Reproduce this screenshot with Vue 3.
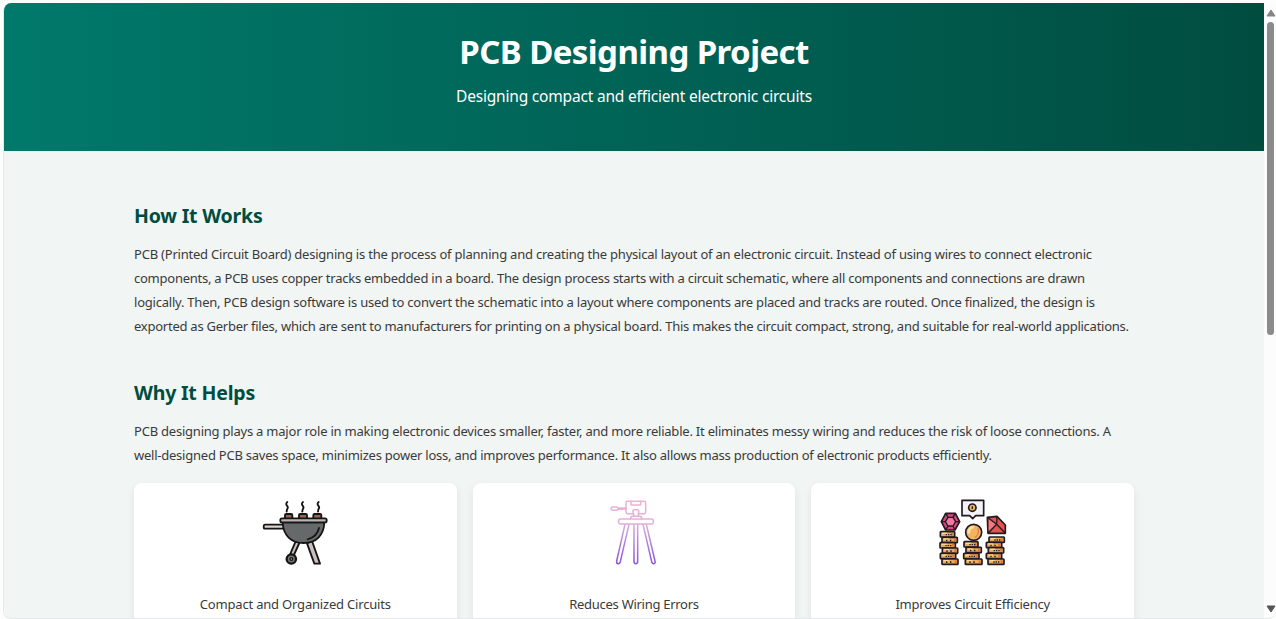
<script setup>
const works = [
  ['PCB (Printed Circuit Board) designing is the process of planning and creating the physical layout of an electronic circuit. Instead of using wires to connect electronic', 958],
  ['components, a PCB uses copper tracks embedded in a board. The design process starts with a circuit schematic, where all components and connections are drawn', 951],
  ['logically. Then, PCB design software is used to convert the schematic into a layout where components are placed and tracks are routed. Once finalized, the design is', 961],
  ['exported as Gerber files, which are sent to manufacturers for printing on a physical board. This makes the circuit compact, strong, and suitable for real-world applications.', 995],
]
const helps = [
  ['PCB designing plays a major role in making electronic devices smaller, faster, and more reliable. It eliminates messy wiring and reduces the risk of loose connections. A', 977],
  ['well-designed PCB saves space, minimizes power loss, and improves performance. It also allows mass production of electronic products efficiently.', 858],
]

// Spreads a line's letters so that it takes up the given measure.
const vFit = {
  mounted(el, { value }) {
    el.style.letterSpacing = '0.001px'
    const w = el.getBoundingClientRect().width
    el.style.letterSpacing = (value - w) / el.textContent.length + 'px'
  },
}

const coins = [
  [31, 119, 43], [36, 136, 46], [30, 152, 46], [37, 168, 46], [31, 184, 46], [36, 201, 48],
  [102, 149, 42], [108, 166, 46], [101, 184, 46], [106, 201, 50],
  [177, 135, 46], [169, 151, 46], [175, 167, 46], [169, 184, 46], [174, 201, 48],
]
</script>

<template>
  <div class="frame">
    <div class="page">
      <header>
        <h1><span v-fit="349.5" class="ln">PCB Designing Project</span></h1>
        <p class="sub"><span v-fit="356" class="ln">Designing compact and efficient electronic circuits</span></p>
      </header>
      <main>
        <section>
          <h2><span v-fit="128.5" class="ln">How It Works</span></h2>
          <p class="body"><span v-for="l in works" :key="l[0]" v-fit="l[1]" class="ln">{{ l[0] }}</span></p>
        </section>
        <section>
          <h2><span v-fit="121" class="ln">Why It Helps</span></h2>
          <p class="body"><span v-for="l in helps" :key="l[0]" v-fit="l[1]" class="ln">{{ l[0] }}</span></p>
        </section>
        <div class="cards">
          <div class="card">
            <svg width="80" height="80" viewBox="0 0 240 240" fill="none" stroke="#151515" stroke-linecap="round" stroke-linejoin="round">
              <g stroke-width="5.500">
                <path d="M97 30q-6 5-1 11t0 11l-1 7M144 30q-6 5-1 11t0 11l-1 7M191 30q-6 5-1 11t0 11l-1 7" />
                <path d="M90 80V69q0-3 4-3h14q4 0 4 3v11M132 80V69q0-3 4-3h16q4 0 4 3v11M175 80V69q0-3 4-3h16q4 0 4 3v11" fill="#96664f" />
                <path d="M83 98H30q-4 0-4 6t4 6h53" fill="#ddd4d0" />
                <path d="M122 148l-18 42 10 5 19-42z" fill="#c9c0bc" />
                <path d="M156 154l22 61h17l-24-68z" fill="#c9c0bc" />
                <path d="M83 91h125c-1 39-25 62-62 62S84 130 83 91z" fill="#66696a" />
                <path d="M192 108c-4 17-16 29-34 34" />
                <rect x="76" y="79" width="139" height="12" rx="5" fill="#b9b5b4" />
              </g>
              <circle cx="109" cy="201" r="14" fill="#777" stroke-width="7" />
              <circle cx="109" cy="201" r="4" fill="#bbb" stroke-width="4" />
            </svg>
            <p><span v-fit="191" class="ln">Compact and Organized Circuits</span></p>
          </div>
          <div class="card">
            <svg width="70" height="80" viewBox="-3 0 210 240" fill="none" stroke="url(#tri)" stroke-width="4.600" stroke-linejoin="round" stroke-linecap="round">
              <defs>
                <linearGradient id="tri" gradientUnits="userSpaceOnUse" x1="0" y1="28" x2="0" y2="215">
                  <stop offset="0" stop-color="#eeb3ce" /><stop offset=".35" stop-color="#e2afdb" />
                  <stop offset=".65" stop-color="#b487dc" /><stop offset="1" stop-color="#8c55d4" />
                </linearGradient>
              </defs>
              <path d="M82 28h51q4 0 4 4v29q0 4-4 4h-17v-9q0-3-3-3h-11q-3 0-3 3v9H82q-4 0-4-4V32q0-4 4-4z" />
              <path d="M93 28v11h29V28M101 65v8M115 65v8M92 81v-3q0-5 6-5h20q7 0 7 5v3M38 45h11q5 0 5 5t-5 5H38q-5 0-5-5t5-5zM54 48h24M54 52h24" />
              <rect x="56" y="81" width="104" height="15" rx="5" />
              <path d="M75 97L50 207q-1 7 4 8 5 1 7-6L87 97M102 97v111q0 7 5.500 7t5.500-7V97M129 97l26 112q2 7 7 6 5-1 3-8L139 97" />
            </svg>
            <p><span v-fit="129.5" class="ln">Reduces Wiring Errors</span></p>
          </div>
          <div class="card">
            <svg width="85" height="80" viewBox="0 0 255 240" fill="none" stroke="#201b23" stroke-width="5" stroke-linejoin="round">
              <path d="M96 25h65v46h-24l-9 9-9-9H96z" fill="#f3f2f6" />
              <circle cx="127" cy="47" r="11" fill="#e9b65d" />
              <path d="M127 43v8" stroke-width="4" />
              <g v-for="(c, i) in coins" :key="i">
                <rect :x="c[0]" :y="c[1]" :width="c[2]" height="16" rx="2" fill="#edaa58" stroke-width="5" />
                <path :d="`M${c[0] + 5} ${c[1] + 5}h15`" stroke="#ffd894" stroke-width="4" />
                <path :d="`M${c[0] + c[2] - 7} ${c[1] + 4}v8`" stroke="#e27643" stroke-width="7" />
                <path :d="i % 2 ? `M${c[0] + 14} ${c[1] + 12}v-5M${c[0] + 26} ${c[1] + 12}v-5` : `M${c[0] + 16} ${c[1] + 9}h18`" :stroke-dasharray="i % 2 ? 'none' : '4 3'" stroke-width="4" />
              </g>
              <path d="M47 64h29l13 25-14 25H47L34 89z" fill="#d5477e" />
              <path d="M54 76h15l8 13-8 13H54l-8-13z" fill="#f0799d" stroke-width="4" />
              <path d="M47 64l7 12M76 64l-7 12M89 89H77M75 114l-6-12M47 114l7-12M34 89h12" stroke-width="4" />
              <circle cx="131" cy="121" r="24" fill="#f3b461" />
              <path d="M116 121q1-13 13-16" stroke="#ffe1a5" stroke-width="8" stroke-linecap="round" />
              <path d="M143 109q8 16-8 27" stroke="#df8152" stroke-width="4" />
              <path d="M172 76l29-3 25 26v25h-52z" fill="#e4534e" />
              <path d="M177 81l21 15-22 21z" fill="#f37983" stroke="none" />
              <path d="M172 76l28 21 1-24M200 97l-26 27M200 97l26 27" stroke-width="4" />
            </svg>
            <p><span v-fit="154.5" class="ln">Improves Circuit Efficiency</span></p>
          </div>
        </div>
      </main>
    </div>
    <aside class="bar">
      <svg width="10" height="8" viewBox="0 0 10 8"><path d="M5 1L9 7H1z" fill="#858585" stroke="#858585" stroke-linejoin="round" /></svg>
      <div class="thumb"></div>
      <svg class="down" width="10" height="8" viewBox="0 0 10 8"><path d="M1 1h8L5 7z" fill="#555" stroke="#555" stroke-linejoin="round" /></svg>
    </aside>
  </div>
</template>

<style>
html, body { margin: 0; background: #fcfdfd; overflow: hidden; }
</style>

<style scoped>
.frame {
  box-sizing: border-box; width: 1273px; height: 616px; margin: 3px 0 0 3px;
  display: flex; overflow: hidden; border: 1px solid #e4e8e8; border-width: 0 0 1px 1px;
  border-radius: 8px 0 8px 8px; background: #fcfcfc;
  font-family: "Noto Sans", "Open Sans", sans-serif; color: #3a3a3a;
}
.page { width: 1260px; height: 615px; overflow: hidden; background: #f1f5f4; flex: none; }
header {
  height: 148px; box-sizing: border-box; padding-top: 24px; text-align: center; color: #fff;
  background: linear-gradient(90deg, #00796b, #004d40);
}
h1, h2, p { margin: 0; }
.ln { display: inline-block; white-space: nowrap; }
h1 { font-size: 33px; line-height: 50px; font-weight: 700; height: 50px; }
.sub { font-size: 15.5px; line-height: 24px; margin-top: 7px; }
main { width: 1000px; margin: 0 auto; padding-top: 48px; }
h2 { color: #004d40; font-size: 19.5px; line-height: 34px; height: 34px; font-weight: 700; }
section { margin-bottom: 38px; }
section + section { margin-bottom: 16px; }
.body { margin-top: 9px; font-size: 13px; }
.body .ln { display: table; line-height: 24px; height: 24px; }
.cards { display: grid; grid-template-columns: repeat(3, 1fr); gap: 16px; }
.card {
  height: 170px; padding-top: 9px; box-sizing: border-box; background: #fff; border-radius: 8px;
  box-shadow: 0 3px 8px rgba(0, 0, 0, .08); text-align: center; font-size: 13px;
}
.card svg { display: block; margin: 0 auto; }
.card p { margin-top: 20px; line-height: 24px; }
.bar { flex: 1; display: flex; flex-direction: column; align-items: center; padding: 6px 0 5px 1px; box-sizing: border-box; }
.thumb { width: 7px; height: 313px; margin-top: 5px; border-radius: 4px; background: #8b8b8b; }
.down { margin-top: auto; }
</style>
